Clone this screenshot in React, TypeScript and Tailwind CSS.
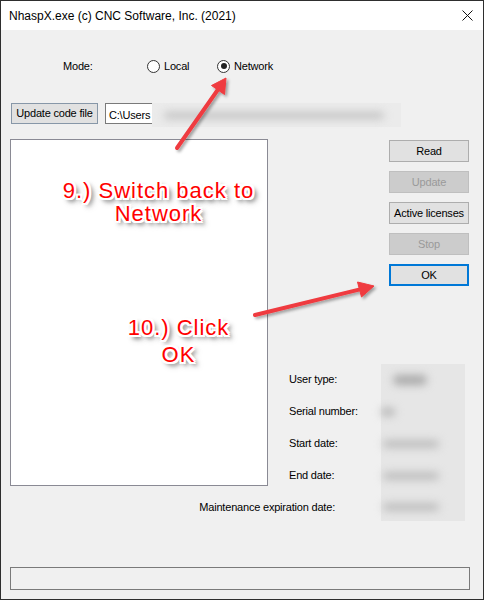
import React from "react";

const ui = "font-['Liberation_Sans',Arial,sans-serif]";

function Radio({ label, checked }: { label: string; checked?: boolean }) {
  return (
    <div className="flex items-center gap-[4px]">
      <div className="flex h-[13px] w-[13px] items-center justify-center rounded-full border border-[#333] bg-white">
        {checked && <div className="h-[6px] w-[6px] rounded-full bg-[#222]" />}
      </div>
      <span>{label}</span>
    </div>
  );
}

function Btn({ label, disabled, focus }: { label: string; disabled?: boolean; focus?: boolean }) {
  const cls = focus
    ? "border-2 border-[#0078d7] bg-[#e1e1e1] text-black"
    : disabled
      ? "border border-[#bfbfbf] bg-[#cccccc] text-[#9a9a9a]"
      : "border border-[#adadad] bg-[#e1e1e1] text-black";
  return (
    <div className={`flex h-[22px] w-[80px] items-center justify-center whitespace-nowrap ${cls}`}>{label}</div>
  );
}

// redacted (blurred) value
function Blur({ w, h = 9, dark = "#b8b8b8", pl = 4 }: { w: number; h?: number; dark?: string; pl?: number }) {
  return (
    <div className="flex h-full items-center" style={{ paddingLeft: pl }}>
      <div className="rounded-full blur-[4px]" style={{ width: w, height: h, background: dark }} />
    </div>
  );
}

const note =
  "[text-shadow:0_0_1px_#fff,1px_1px_0_#fff,-1px_-1px_0_#fff,1px_-1px_0_#fff,-1px_1px_0_#fff,2px_2px_0_#fff,-2px_-2px_0_#fff,2px_-2px_0_#fff,-2px_2px_0_#fff,2px_0_0_#fff,-2px_0_0_#fff,0_2px_0_#fff,0_-2px_0_#fff,3px_3px_4px_rgba(0,0,0,0.7),4px_4px_6px_rgba(0,0,0,0.35)]";

export default function App() {
  const rows = ["User type:", "Serial number:", "Start date:", "End date:"];
  return (
    <div className={`relative flex h-[600px] w-[484px] flex-col border border-[#2e2e2e] bg-[#f0f0f0] text-[11px] tracking-[-0.2px] text-black ${ui}`}>
      {/* title bar */}
      <div className="flex h-[29px] shrink-0 items-center justify-between bg-white pl-[8px] pr-[10px]">
        <span className="text-[12px] tracking-normal">NhaspX.exe (c) CNC Software, Inc. (2021)</span>
        <svg width="11" height="11" viewBox="0 0 11 11">
          <path d="M0.5 0.5L10.5 10.5M10.5 0.5L0.5 10.5" stroke="#111" strokeWidth="1" />
        </svg>
      </div>

      {/* mode */}
      <div className="mt-[28px] flex h-[16px] items-center">
        <span className="ml-[62px] w-[84px]">Mode:</span>
        <div className="w-[70px]">
          <Radio label="Local" />
        </div>
        <Radio label="Network" checked />
      </div>

      {/* code file */}
      <div className="mt-[29px] flex items-start">
        <div className="ml-[10px] flex h-[21px] w-[87px] items-center justify-center border border-[#8797a8] bg-[#e1e1e1]">
          Update code file
        </div>
        <div className="ml-[7px] flex h-[21px] w-[288px] items-start border border-[#7a7a7a] bg-white">
          <span className="pl-[3px] pt-[3px]">C:\Users</span>
          <div className="-mt-px ml-[2px] h-[24px] w-[249px] shrink-0 bg-[#ebebeb]">
            <Blur w={220} h={7} dark="#c2c2c2" pl={12} />
          </div>
        </div>
      </div>

      {/* main */}
      <div className="mt-[15px] flex items-start">
        <div className="ml-[9px] h-[347px] w-[258px] shrink-0 border border-[#8a8a94] bg-white" />
        <div className="flex flex-col">
          <div className="ml-[121px] mt-[1px] flex flex-col gap-[9px]">
            <Btn label="Read" />
            <Btn label="Update" disabled />
            <Btn label="Active licenses" />
            <Btn label="Stop" disabled />
            <Btn label="OK" focus />
          </div>
          <div className="ml-[21px] mt-[78px] grid grid-cols-[92px_84px]">
            {rows.map((r, i) => (
              <React.Fragment key={r}>
                <div className="h-[32px] pt-[9px] leading-[13px]">{r}</div>
                <div className="h-[32px] bg-[#e6e6e6]">
                  {i === 0 && <Blur w={34} h={10} dark="#a9a9a9" pl={12} />}
                  {i === 1 && <Blur w={14} h={8} dark="#b5b5b5" pl={0} />}
                  {i > 1 && <Blur w={56} h={8} dark="#bdbdbd" pl={2} />}
                </div>
              </React.Fragment>
            ))}
            <div className="flex h-[29px] w-[46px] justify-end whitespace-nowrap pt-[9px] leading-[13px]">
              Maintenance expiration date:
            </div>
            <div className="h-[29px] bg-[#e6e6e6]">
              <Blur w={56} h={8} dark="#bdbdbd" pl={2} />
            </div>
          </div>
        </div>
      </div>

      {/* status bar */}
      <div className="ml-[9px] mt-[46px] h-[23px] w-[460px] border border-[#7a7a7a] bg-[#f0f0f0]" />

      {/* annotations */}
      <svg className="pointer-events-none absolute left-0 top-0" width="484" height="600" viewBox="0 0 484 600">
        <defs>
          <filter id="sh" x="-20%" y="-20%" width="140%" height="140%">
            <feDropShadow dx="2" dy="2" stdDeviation="1.5" floodColor="#000" floodOpacity="0.35" />
          </filter>
        </defs>
        <g filter="url(#sh)" fill="#ef3b3f" stroke="#ef3b3f">
          <line x1="176" y1="147" x2="217" y2="88.5" strokeWidth="4" strokeLinecap="round" />
          <polygon points="225,77 223.5,93.5 210.5,84.5" strokeWidth="1" strokeLinejoin="round" />
          <line x1="254" y1="314" x2="358" y2="288.6" strokeWidth="4" strokeLinecap="round" />
          <polygon points="373,285 360.5,296 356.5,281" strokeWidth="1" strokeLinejoin="round" />
        </g>
      </svg>
      <div
        className={`pointer-events-none absolute left-[50px] top-[178px] w-[215px] text-center font-['Liberation_Sans',Arial,sans-serif] text-[22px] leading-[23px] tracking-[1px] text-[#ff0000] ${note}`}
      >
        9.) Switch back to
        <br />
        Network
      </div>
      <div
        className={`pointer-events-none absolute left-[110px] top-[313px] w-[135px] text-center font-['Liberation_Sans',Arial,sans-serif] text-[22px] leading-[27px] tracking-[1px] text-[#ff0000] ${note}`}
      >
        10.) Click
        <br />
        OK
      </div>
    </div>
  );
}
